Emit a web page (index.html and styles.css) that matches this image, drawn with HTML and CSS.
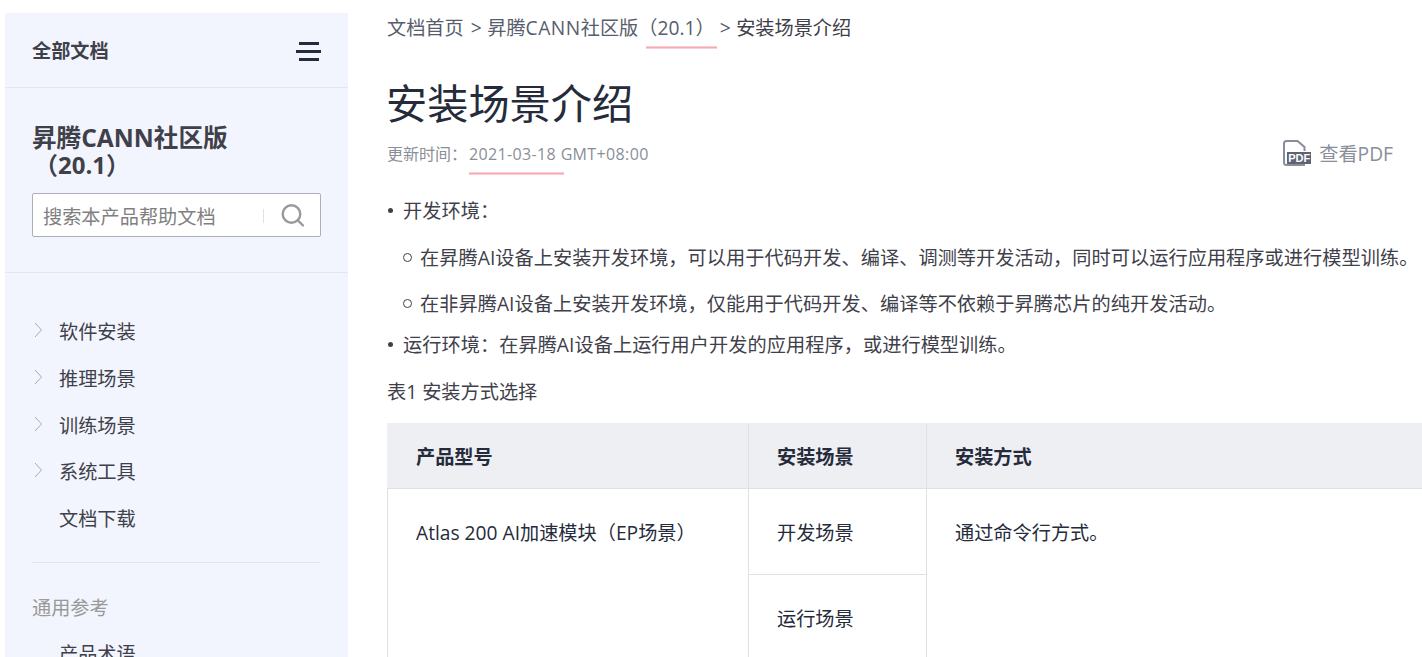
FILE: index.html
```html
<!DOCTYPE html>
<html lang="zh-CN">
<head>
<meta charset="utf-8">
<title>安装场景介绍</title>
<link rel="stylesheet" href="styles.css">
</head>
<body>
<div class="page">
  <aside class="sidebar">
    <div class="side-head">
      <span class="side-head-title">全部文档</span>
      <span class="burger"><i></i><i></i><i></i></span>
    </div>
    <div class="side-product">
      <h2 class="product-name">昇腾CANN社区版</h2>
      <div class="product-ver">（20.1）</div>
      <div class="search">
        <span class="search-text">搜索本产品帮助文档</span>
        <span class="search-sep"></span>
        <svg class="search-icon" width="24" height="24" viewBox="0 0 24 24" fill="none" stroke="#999" stroke-width="2.4"><circle cx="11.500" cy="11" r="8.800"/><path d="M18 17.500l5 5" stroke-linecap="round"/></svg>
      </div>
    </div>
    <nav class="side-nav">
      <ul class="nav-list">
        <li class="nav-item"><svg class="chev" width="9" height="16" viewBox="0 0 9 16" fill="none" stroke="#aaa" stroke-width="1"><path d="M1 1l6.500 7L1 15"/></svg>软件安装</li>
        <li class="nav-item"><svg class="chev" width="9" height="16" viewBox="0 0 9 16" fill="none" stroke="#aaa" stroke-width="1"><path d="M1 1l6.500 7L1 15"/></svg>推理场景</li>
        <li class="nav-item"><svg class="chev" width="9" height="16" viewBox="0 0 9 16" fill="none" stroke="#aaa" stroke-width="1"><path d="M1 1l6.500 7L1 15"/></svg>训练场景</li>
        <li class="nav-item"><svg class="chev" width="9" height="16" viewBox="0 0 9 16" fill="none" stroke="#aaa" stroke-width="1"><path d="M1 1l6.500 7L1 15"/></svg>系统工具</li>
        <li class="nav-item">文档下载</li>
      </ul>
      <div class="nav-rule"></div>
      <div class="nav-group">通用参考</div>
      <ul class="nav-list">
        <li class="nav-item">产品术语</li>
      </ul>
    </nav>
  </aside>
  <main class="main">
    <div class="crumbs">文档首页<span class="sep">&gt;</span><span class="crumb-product">昇腾<span class="latin-wide">CANN</span>社区版</span><span class="wavy wavy-ver">（20.1）</span><span class="sep sep-last">&gt;</span><span class="crumb-now">安装场景介绍</span></div>
    <h1 class="title">安装场景介绍</h1>
    <div class="meta">
      <span class="meta-date">更新时间：<span class="date-val"><span class="wavy wavy-date">2021-03-18</span> GMT+08:00</span></span>
      <span class="pdf">
        <span class="pdf-icon">
          <svg width="28" height="26" viewBox="0 0 28 26"><path d="M1 11V3.500C1 2 2 1 3.500 1H14.500L21.500 7V11M1 11V22.500C1 24 2 25 3.500 25H22" fill="none" stroke="#8a8e99" stroke-width="2"/><rect x="4" y="12" width="24" height="12" fill="#5e6474"/></svg>
          <span class="pdf-label">PDF</span>
        </span>
        <span class="pdf-text">查看PDF</span>
      </span>
    </div>
    <ul class="list">
      <li class="li-first">开发环境：
        <ul class="sublist">
          <li>在昇腾AI设备上安装开发环境，可以用于代码开发、编译、调测等开发活动，同时可以运行应用程序或进行模型训练。</li>
          <li>在非昇腾AI设备上安装开发环境，仅能用于代码开发、编译等不依赖于昇腾芯片的纯开发活动。</li>
        </ul>
      </li>
      <li>运行环境：在昇腾AI设备上运行用户开发的应用程序，或进行模型训练。</li>
    </ul>
    <div class="caption">表1 安装方式选择</div>
    <table class="table">
      <colgroup><col class="c1"><col class="c2"><col class="c3"></colgroup>
      <thead>
        <tr><th>产品型号</th><th>安装场景</th><th>安装方式</th></tr>
      </thead>
      <tbody>
        <tr><td rowspan="2">Atlas 200 AI加速模块（EP场景）</td><td>开发场景</td><td rowspan="2">通过命令行方式。</td></tr>
        <tr><td>运行场景</td></tr>
      </tbody>
    </table>
  </main>
</div>
</body>
</html>
```
FILE: styles.css
```css
* { box-sizing: border-box; }
html, body { margin: 0; height: 657px; overflow: hidden; background: #fff; }
body { font-family: "Open Sans", "Noto Sans CJK SC", sans-serif; font-size: 19.2px; color: #40404a; }
ul { margin: 0; padding: 0; list-style: none; }
.page { display: flex; width: 1422px; height: 657px; padding: 13px 0 0 5px; overflow: hidden; }
.sidebar { flex: 0 0 343px; background: #f2f5fd; height: 660px; overflow: hidden; }
.side-head { display: flex; align-items: center; justify-content: space-between; height: 75px; padding: 0 27px; border-bottom: 1px solid #e2e6ef; }
.side-head-title { font-size: 19.2px; font-weight: 700; color: #40404a; line-height: 75px; }
.burger { display: flex; flex-direction: column; gap: 5px; align-items: center; width: 25px; margin-top: 2px; }
.burger i { display: block; width: 20px; height: 3px; background: #252b3a; }
.burger i:nth-child(2) { width: 25px; }
.side-product { padding: 36px 27px 0; border-bottom: 1px solid #e2e6ef; height: 185px; }
.product-name { margin: 0; font-size: 24.600px; line-height: 27px; font-weight: 700; color: #40404a; white-space: nowrap; }
.product-ver { padding-left: 2px; font-size: 24px; line-height: 27px; font-weight: 700; color: #40404a; }
.search { display: flex; align-items: center; width: 289px; height: 44px; margin-top: 15px; padding: 2px 0 0 10px; background: #fff; border: 1px solid #adb0b8; border-radius: 2px; }
.search-text { color: #808080; font-size: 19.2px; width: 220px; white-space: nowrap; }
.search-sep { width: 1px; height: 14px; background: #dfe1e6; }
.search-icon { margin-left: 16px; margin-top: -2px; }
.side-nav { padding: 36px 27px 0; }
.nav-item { position: relative; padding-left: 27px; height: 46.800px; line-height: 46.800px; color: #40404a; }
.chev { position: absolute; left: 2px; top: 13px; }
.nav-rule { height: 1px; background: #e2e6ef; width: 288px; margin: 19px 2px 22px 0; }
.nav-group { color: #999; line-height: 46px; height: 46px; }
.main { flex: 1 1 auto; min-width: 0; padding-left: 39px; }
.crumbs { color: #575d6c; line-height: 30px; white-space: nowrap; }
.sep { margin: 0 5.500px 0 7px; }
.sep-last { margin-left: 4px; }
.crumb-now { color: #40404a; }
.latin-wide { letter-spacing: 0.500px; }
.wavy { position: relative; display: inline-block; }
.wavy::after { content: ""; position: absolute; height: 3px; background: linear-gradient(#fbdfe2, #f6aab2 50%, #fbdfe2); }
.wavy-ver { margin-right: 1px; }
.wavy-ver::after { left: 8px; right: -2px; bottom: -6px; }
.wavy-date::after { left: 0; right: -8px; bottom: -10px; }
.title { margin: 30px 0 0 -1px; font-size: 41.200px; font-weight: 400; line-height: 60px; color: #252b3a; white-space: nowrap; }
.meta { display: flex; align-items: center; justify-content: space-between; height: 34px; margin-top: 3px; width: 1006px; }
.meta-date { color: #8a8e99; font-size: 16px; }
.date-val { letter-spacing: 0.360px; margin-left: 2px; }
.pdf { display: flex; align-items: center; color: #8a8e99; }
.pdf-icon { position: relative; display: flex; width: 28px; height: 26px; }
.pdf-label { position: absolute; left: 5px; top: 11px; font-family: "Liberation Sans", sans-serif; font-size: 11px; font-weight: 700; color: #fff; line-height: 14px; }
.pdf-text { margin-left: 8px; color: #8a8e99; font-size: 19.2px; }
.list { margin-top: 18px; color: #40404a; white-space: nowrap; letter-spacing: 0.045px; }
.list > li { position: relative; padding-left: 16px; line-height: 46px; }
.list > li::before { content: ""; position: absolute; left: 1px; top: 20px; width: 5px; height: 5px; border-radius: 50%; background: #40404a; }
.sublist { margin: 1px 0 -5px; }
.sublist > li { position: relative; padding-left: 17px; line-height: 46px; }
.sublist > li::before { content: ""; position: absolute; left: 0; top: 18px; width: 7px; height: 7px; border-radius: 50%; border: 1px solid #40404a; }
.caption { line-height: 46px; margin-top: 1px; color: #40404a; white-space: nowrap; }
.table { border-collapse: collapse; table-layout: fixed; width: 1200px; margin-top: 8px; color: #252b3a; }
.c1 { width: 361px; } .c2 { width: 178px; } .c3 { width: 661px; }
.table th, .table td { border: 1px solid #dfe1e6; padding: 0 28px; text-align: left; font-size: 19.2px; font-weight: 400; }
.table th { height: 65px; background: #eeeff3; font-weight: 700; border-top-color: #eeeff3; }
.table th:first-child { border-left-color: #eeeff3; }
.table td { height: 86px; vertical-align: top; padding-top: 29px; }
```
